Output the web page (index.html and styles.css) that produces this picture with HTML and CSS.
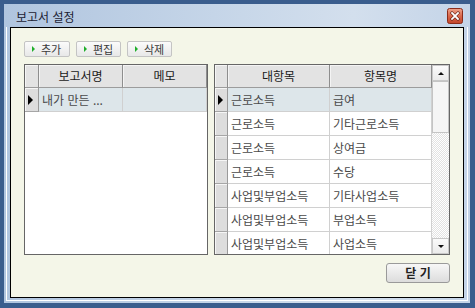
FILE: index.html
```html
<!DOCTYPE html>
<html lang="ko">
<head>
<meta charset="utf-8">
<title>보고서 설정</title>
<link rel="stylesheet" href="styles.css">
</head>
<body>
<div class="window">
  <div class="frame">
    <div class="titlebar">
      <span class="title">보고서 설정</span>
      <span class="close-x">
        <svg width="16" height="16" viewBox="0 0 16 16">
          <defs>
            <linearGradient id="cg" x1="0" y1="0" x2="0" y2="1">
              <stop offset="0" stop-color="#eea48c"/>
              <stop offset="0.5" stop-color="#d9674a"/>
              <stop offset="1" stop-color="#c2452a"/>
            </linearGradient>
          </defs>
          <rect x="0.5" y="0.5" width="15" height="15" rx="2" fill="url(#cg)" stroke="#8b2c1a"/>
          <path d="M5 5 L11 11 M11 5 L5 11" stroke="#5a1a10" stroke-width="3" stroke-linecap="square"/>
          <path d="M5 5 L11 11 M11 5 L5 11" stroke="#ffffff" stroke-width="1.8" stroke-linecap="square"/>
        </svg>
      </span>
    </div>
    <div class="bezel">
      <div class="content">
        <div class="toolbar">
          <button class="tbtn tbtn-add"><span class="arrow"></span>추가</button>
          <button class="tbtn"><span class="arrow"></span>편집</button>
          <button class="tbtn"><span class="arrow"></span>삭제</button>
        </div>
        <div class="grids">
          <div class="grid grid-left">
            <div class="gtable">
              <div class="row head">
                <div class="ind hind"></div>
                <div class="cell hcell">보고서명</div>
                <div class="cell hcell">메모</div>
              </div>
              <div class="row sel">
                <div class="ind"><span class="tri"></span></div>
                <div class="cell">내가 만든 ...</div>
                <div class="cell"></div>
              </div>
            </div>
          </div>
          <div class="grid grid-right">
            <div class="gtable">
              <div class="row head">
                <div class="ind hind"></div>
                <div class="cell hcell">대항목</div>
                <div class="cell hcell">항목명</div>
              </div>
              <div class="row sel">
                <div class="ind"><span class="tri"></span></div>
                <div class="cell">근로소득</div>
                <div class="cell">급여</div>
              </div>
              <div class="row">
                <div class="ind"></div>
                <div class="cell">근로소득</div>
                <div class="cell">기타근로소득</div>
              </div>
              <div class="row">
                <div class="ind"></div>
                <div class="cell">근로소득</div>
                <div class="cell">상여금</div>
              </div>
              <div class="row">
                <div class="ind"></div>
                <div class="cell">근로소득</div>
                <div class="cell">수당</div>
              </div>
              <div class="row">
                <div class="ind"></div>
                <div class="cell">사업및부업소득</div>
                <div class="cell">기타사업소득</div>
              </div>
              <div class="row">
                <div class="ind"></div>
                <div class="cell">사업및부업소득</div>
                <div class="cell">부업소득</div>
              </div>
              <div class="row">
                <div class="ind"></div>
                <div class="cell">사업및부업소득</div>
                <div class="cell">사업소득</div>
              </div>
            </div>
            <div class="scrollbar">
              <div class="sbtn"><span class="up"></span></div>
              <div class="thumb"></div>
              <div class="track"></div>
              <div class="sbtn"><span class="down"></span></div>
            </div>
          </div>
        </div>
        <div class="footer">
          <button class="close-btn">닫 기</button>
        </div>
      </div>
    </div>
  </div>
</div>
</body>
</html>
```

FILE: styles.css
```css
html, body {
  margin: 0;
  padding: 0;
  background: #3a5d8d;
}
body {
  font-family: "Noto Sans CJK KR", "Noto Sans", sans-serif;
}
.window {
  width: 475px;
  height: 308px;
  box-sizing: border-box;
  background: #3a5d8d;
  padding: 4px 5px 5px 4px;
}
.frame {
  height: 100%;
  box-sizing: border-box;
  display: flex;
  flex-direction: column;
  background: linear-gradient(90deg, #b0c5df 0%, #c5d5e8 45%, #d3dfed 75%, #c4d4e8 100%);
  padding: 0 2px 2px 2px;
}
.titlebar {
  height: 23px;
  display: flex;
  align-items: flex-start;
  padding-left: 10px;
  flex: none;
}
.title {
  font-size: 12px;
  line-height: 14px;
  margin-top: 6px;
  color: #1c2233;
}
.close-x {
  margin-left: auto;
  margin-top: 4px;
  margin-right: 5px;
  width: 16px;
  height: 16px;
  display: block;
}
.close-x svg { display: block; }
.bezel {
  flex: 1;
  display: flex;
  border: 1px solid #ffffff;
  border-top: 0;
  padding: 0 3px 2px 3px;
}
.content {
  flex: 1;
  border: 1px solid #000;
  background: #f4f6e8;
  padding: 13px 13px 0 13px;
  display: flex;
  flex-direction: column;
}
.toolbar {
  display: flex;
  gap: 6px;
  height: 16px;
}
.tbtn {
  width: 45px;
  height: 16px;
  box-sizing: border-box;
  margin: 0;
  padding: 0 0 0 7px;
  border: 1px solid #c4c4c4;
  border-radius: 2px;
  background: linear-gradient(#fbfbfb, #e8e8e8);
  display: flex;
  align-items: center;
  font-family: "Noto Sans CJK KR", sans-serif;
  font-size: 11px;
  line-height: 13px;
  color: #3a3a3a;
}
.tbtn-add { width: 46px; }
.arrow {
  width: 0;
  height: 0;
  border-left: 3px solid #1fae2a;
  border-top: 3px solid transparent;
  border-bottom: 3px solid transparent;
  margin-right: 6px;
}
.grids {
  display: flex;
  gap: 6px;
  margin-top: 7px;
  height: 191px;
}
.grid {
  box-sizing: border-box;
  height: 191px;
  border: 1px solid #666666;
  background: #ffffff;
  display: flex;
  overflow: hidden;
}
.grid-left { width: 184px; }
.grid-right { width: 236px; }
.gtable {
  flex: 1;
  overflow: hidden;
}
.row {
  display: grid;
  height: 24px;
  font-size: 12px;
  line-height: 23px;
  color: #4a4a4a;
}
.grid-left .row { grid-template-columns: 14px 84px 84px; }
.grid-right .row { grid-template-columns: 13px 102px 102px; }
.row.head { height: 23px; line-height: 22px; color: #1a1a1a; }
.cell {
  box-sizing: border-box;
  border-right: 1px solid #d0d0d0;
  border-bottom: 1px solid #d0d0d0;
  padding-left: 3px;
  white-space: nowrap;
  overflow: hidden;
}
.hcell {
  background: #e3e3e3;
  border-right: 1px solid #8e8e8e;
  border-bottom: 1px solid #9c9c9c;
  box-shadow: inset 1px 1px 0 #f4f4f4;
  text-align: center;
  padding-left: 0;
}
.sel .cell { background: #dde6ea; }
.ind {
  box-sizing: border-box;
  background: #dddddd;
  border-right: 1px solid #9a9a9a;
  border-bottom: 1px solid #a6a6a6;
  box-shadow: inset 1px 1px 0 #f6f6f6;
  display: flex;
  align-items: center;
  padding-left: 3px;
}
.hind {
  background: #e3e3e3;
  border-right: 1px solid #8e8e8e;
  border-bottom: 1px solid #9c9c9c;
}
.tri {
  width: 0;
  height: 0;
  border-left: 5px solid #000;
  border-top: 5px solid transparent;
  border-bottom: 5px solid transparent;
}
.scrollbar {
  width: 17px;
  flex: none;
  display: flex;
  flex-direction: column;
  background: repeating-conic-gradient(#ffffff 0 25%, #e2e2e2 0 50%) 0 0 / 2px 2px;
}
.sbtn {
  height: 16px;
  box-sizing: border-box;
  border: 1px solid #c8c8c8;
  background: linear-gradient(#fafafa, #ebebeb);
  display: flex;
  align-items: center;
  justify-content: center;
  flex: none;
}
.up {
  width: 0; height: 0;
  border-bottom: 3px solid #111;
  border-left: 3px solid transparent;
  border-right: 3px solid transparent;
}
.down {
  width: 0; height: 0;
  border-top: 3px solid #111;
  border-left: 3px solid transparent;
  border-right: 3px solid transparent;
}
.thumb {
  height: 52px;
  box-sizing: border-box;
  border: 1px solid #c4c4c4;
  background: #f5f5f5;
  flex: none;
}
.track { flex: 1; }
.footer {
  display: flex;
  justify-content: flex-end;
  margin-top: 8px;
}
.close-btn {
  width: 64px;
  height: 20px;
  box-sizing: border-box;
  margin: 0;
  padding: 0;
  border: 1px solid #9a9a9a;
  border-radius: 3px;
  background: linear-gradient(#f7f7f7, #dcdcdc);
  font-family: "Noto Sans CJK KR", sans-serif;
  font-size: 12px;
  font-weight: bold;
  line-height: 18px;
  color: #222;
}
```
